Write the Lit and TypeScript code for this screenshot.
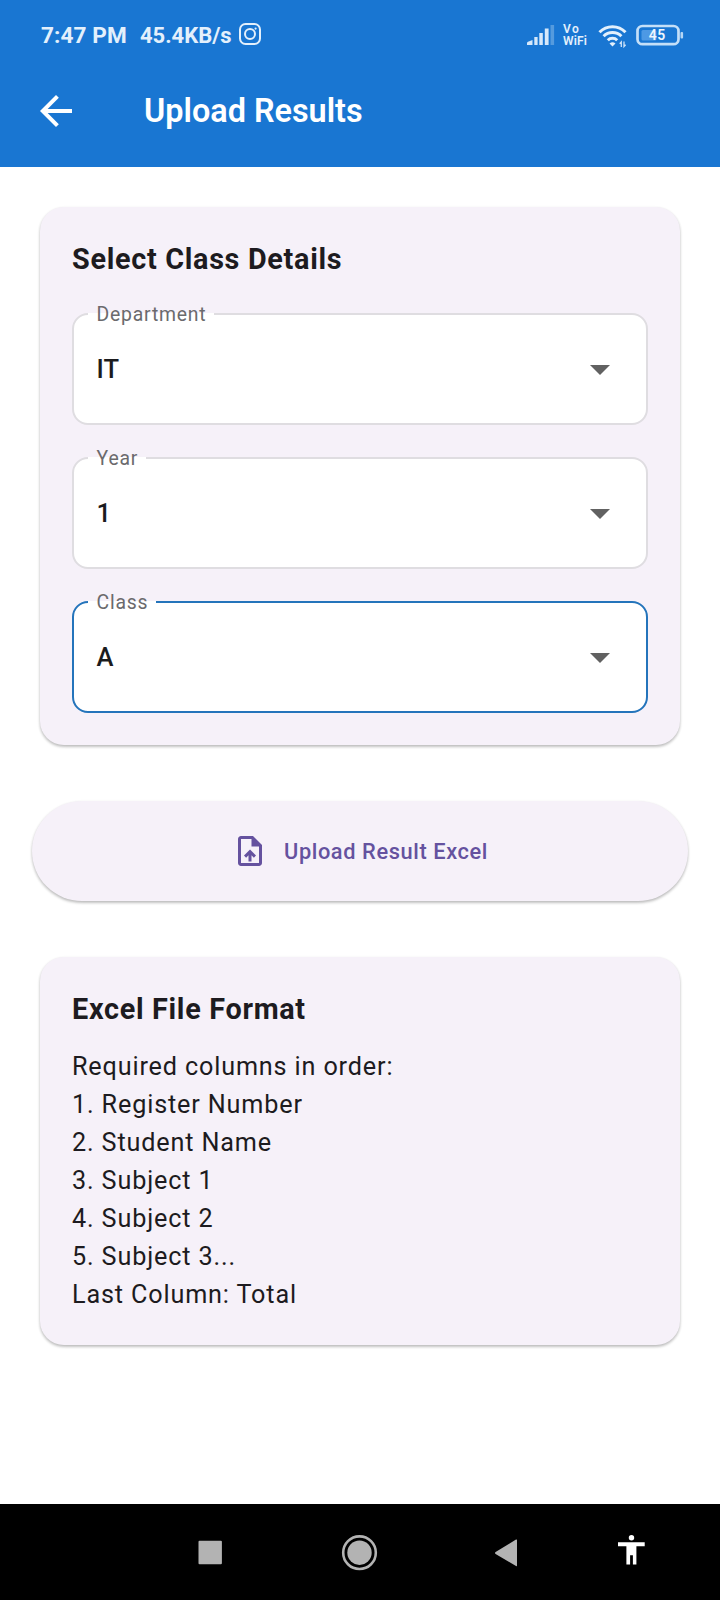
import { LitElement, html, css, svg } from "lit";
import { customElement, property } from "lit/decorators.js";

@customElement("select-field")
class SelectField extends LitElement {
  @property() label = "";
  @property() value = "";
  @property({ type: Boolean }) active = false;

  static styles = css`
    :host { display: block; }
    .box {
      position: relative;
      box-sizing: border-box;
      height: 112px;
      border: 2px solid #dfdde1;
      border-radius: 16px;
      background: #fff;
      display: flex;
      align-items: center;
      justify-content: space-between;
      padding: 0 22px 0 22.5px;
    }
    .active { border-color: #2474bb; }
    .label {
      position: absolute;
      left: 14px;
      top: -14px;
      padding: 0 8px 0 8.6px;
      line-height: 27px;
      font-size: 19.4px;
      letter-spacing: 0.76px;
      color: #6b6a6d;
      background: linear-gradient(#fff, #fff) 0 12px / 100% 3px no-repeat;
    }
    .value { font-size: 25.6px; font-weight: 500; color: #1b1b1d; letter-spacing: 0.2px; }
    .caret { width: 48px; height: 48px; fill: #616161; }
  `;

  render() {
    return html`<div class="box ${this.active ? "active" : ""}">
      <span class="label">${this.label}</span>
      <span class="value">${this.value}</span>
      <svg class="caret" viewBox="0 0 24 24"><path d="M7 10l5 5 5-5z" /></svg>
    </div>`;
  }
}

@customElement("status-bar")
class StatusBar extends LitElement {
  static styles = css`
    :host { display: flex; align-items: center; justify-content: space-between; height: 70px; padding: 0 36.5px 0 41px; color: #e3f0fc; }
    .side { display: flex; align-items: center; }
    .time { font-size: 22.6px; font-weight: 700; letter-spacing: 0.1px; }
    .speed { font-size: 22px; font-weight: 700; margin-left: 13px; }
    .insta { width: 24px; height: 24px; margin: -2px 0 0 6px; }
    .signal { width: 28px; height: 20px; }
    .vo { display: flex; flex-direction: column; margin: 0 0 0 8.5px; width: 27.5px; font-size: 12px; line-height: 12.5px; font-weight: 600; letter-spacing: 0.2px; }
    .vo-top { letter-spacing: 1.5px; }
    .wifi { width: 30px; height: 24px; margin: 2px 0 0 7px; }
    .battery { width: 48px; height: 22px; margin-left: 8px; }
    .level { font: 600 14px Roboto, sans-serif; letter-spacing: 0.5px; fill: #eef6fe; }
  `;

  render() {
    return html`
      <div class="side">
        <span class="time">7:47 PM</span>
        <span class="speed">45.4KB/s</span>
        <svg class="insta" viewBox="0 0 24 24" fill="none" stroke="#e3f0fc" stroke-width="2">
          <rect x="2" y="2" width="20" height="20" rx="5.5" />
          <circle cx="12" cy="12" r="5" />
          <circle cx="17.6" cy="6.6" r="1.1" fill="#e3f0fc" stroke="none" />
        </svg>
      </div>
      <div class="side">
        <svg class="signal" viewBox="0 0 28 20" fill="#d6e8fa">
          <path d="M0 20v-1.800q0-1 1-1.400l4.500-1.800v5z" />
          <rect x="7.300" y="12" width="3.300" height="8" />
          <rect x="12.300" y="8" width="3.500" height="12" />
          <rect x="17.800" y="3.500" width="3.800" height="16.500" />
          <rect x="23.500" y="0" width="3.600" height="20" opacity="0.32" />
        </svg>
        <div class="vo"><span class="vo-top">Vo</span><span>WiFi</span></div>
        <svg class="wifi" viewBox="0 0 30 24">
          <g fill="none" stroke="#e3f0fc" stroke-width="3">
            <path d="M1.500 8.200a18 18 0 0 1 26 0" />
            <path d="M5.600 12.200a12.400 12.400 0 0 1 17.800 0" />
            <path d="M9.800 16.200a6.700 6.700 0 0 1 9.400 0" />
          </g>
          <path fill="#e3f0fc" d="M14.500 22.500l-3-3a4.500 4.500 0 0 1 6 0z" />
          <path fill="none" stroke="#cfe3f8" stroke-width="1.300" d="M23.300 23v-5l-1.600 1.800M26 17.500v5l1.600-1.800" />
        </svg>
        <svg class="battery" viewBox="0 0 48 22">
          <rect x="1.500" y="2" width="41" height="18.200" rx="5" fill="none" stroke="#c4dff8" stroke-width="2.700" />
          <rect x="5.500" y="6" width="15" height="10.500" rx="1.500" fill="#4d99e4" />
          <rect x="44.500" y="8" width="2.600" height="6.500" rx="1" fill="#b5d6f5" />
          <text class="level" x="21.300" y="16.300" text-anchor="middle">45</text>
        </svg>
      </div>`;
  }
}

@customElement("system-nav")
class SystemNav extends LitElement {
  static styles = css`
    :host { display: block; height: 96px; background: #000; }
    .keys { display: block; width: 720px; height: 96px; }
  `;

  render() {
    return html`<svg class="keys" viewBox="0 0 720 96">
      ${svg`
        <rect x="198.500" y="36.800" width="23.400" height="23.400" rx="1" fill="#b3b3b3" />
        <circle cx="359.500" cy="48.700" r="12.200" fill="#b3b3b3" />
        <circle cx="359.500" cy="48.700" r="16.300" fill="none" stroke="#b3b3b3" stroke-width="2.600" />
        <path d="M517 36.200v25.200q0 1.200-1 .6L495.600 49.900q-1.200-1 0-2L516 35.600q1-.6 1 .6z" fill="#b3b3b3" />
        <circle cx="631.500" cy="33.700" r="2.700" fill="#fff" />
        <path d="M618 38.200h26.700v4H636.400v18.300h-3.500V51.200h-2.800v9.300h-3.700V42.200H618z" fill="#fff" />
      `}
    </svg>`;
  }
}

@customElement("app-root")
class AppRoot extends LitElement {
  private fields = [
    { label: "Department", value: "IT" },
    { label: "Year", value: "1" },
    { label: "Class", value: "A", active: true },
  ];

  private lines = [
    "Required columns in order:",
    "1. Register Number",
    "2. Student Name",
    "3. Subject 1",
    "4. Subject 2",
    "5. Subject 3...",
    "Last Column: Total",
  ];

  static styles = css`
    :host {
      display: flex;
      flex-direction: column;
      height: 1600px;
      background: #fff;
      font-family: Roboto, sans-serif;
      color: #1d1b20;
    }
    .header { background: #1976d2; height: 167px; }
    .bar { display: flex; align-items: center; height: 82px; padding-left: 32px; }
    .back { width: 48px; height: 48px; fill: #fff; }
    .title { margin: 0 0 0 64px; font-size: 32.4px; line-height: 42px; font-weight: 600; color: #fff; }
    .content { flex: 1; padding: 40px 32px 0; }
    .card { margin: 0 8px; padding: 32px; border-radius: 24px; }
    .card, .upload {
      background: #f6f1f9;
      box-shadow: 0 2px 3px rgba(0, 0, 0, 0.2), 0 1px 3px rgba(0, 0, 0, 0.1);
    }
    .heading { margin: 0; font-size: 28.8px; line-height: 40px; font-weight: 700; letter-spacing: 0.69px; }
    .fields { display: flex; flex-direction: column; gap: 32px; margin-top: 34px; }
    .upload {
      display: flex;
      align-items: center;
      justify-content: center;
      width: 100%;
      height: 100px;
      margin: 56px 0;
      padding: 0;
      border: 0;
      border-radius: 50px;
      font: 500 21.8px Roboto, sans-serif;
      letter-spacing: 0.6px;
      color: #65529f;
    }
    .file { width: 36px; height: 36px; margin-right: 16px; fill: #65529f; }
    .format { margin: 19px 0 -1px; font-size: 25.2px; line-height: 38px; letter-spacing: 0.85px; }
  `;

  render() {
    return html`
      <header class="header">
        <status-bar></status-bar>
        <div class="bar">
          <svg class="back" viewBox="0 0 24 24"><path d="M20 11H7.830l5.590-5.590L12 4l-8 8 8 8 1.410-1.410L7.830 13H20z" /></svg>
          <h1 class="title">Upload Results</h1>
        </div>
      </header>
      <main class="content">
        <section class="card">
          <h2 class="heading">Select Class Details</h2>
          <div class="fields">
            ${this.fields.map((f) => html`<select-field .label=${f.label} .value=${f.value} .active=${!!f.active}></select-field>`)}
          </div>
        </section>
        <button class="upload">
          <svg class="file" viewBox="0 0 24 24">
            <path d="M14 2H6c-1.100 0-1.990.900-1.990 2L4 20c0 1.100.890 2 1.990 2H18c1.100 0 2-.900 2-2V8l-6-6zm4 18H6V4h7v5h5v11zM8 15.010l1.410 1.410L11 14.840V19h2v-4.160l1.590 1.590L16 15.010 12.010 11 8 15.010z" />
          </svg>
          <span>Upload Result Excel</span>
        </button>
        <section class="card">
          <h2 class="heading">Excel File Format</h2>
          <div class="format">${this.lines.map((l) => html`<div>${l}</div>`)}</div>
        </section>
      </main>
      <system-nav></system-nav>`;
  }
}
